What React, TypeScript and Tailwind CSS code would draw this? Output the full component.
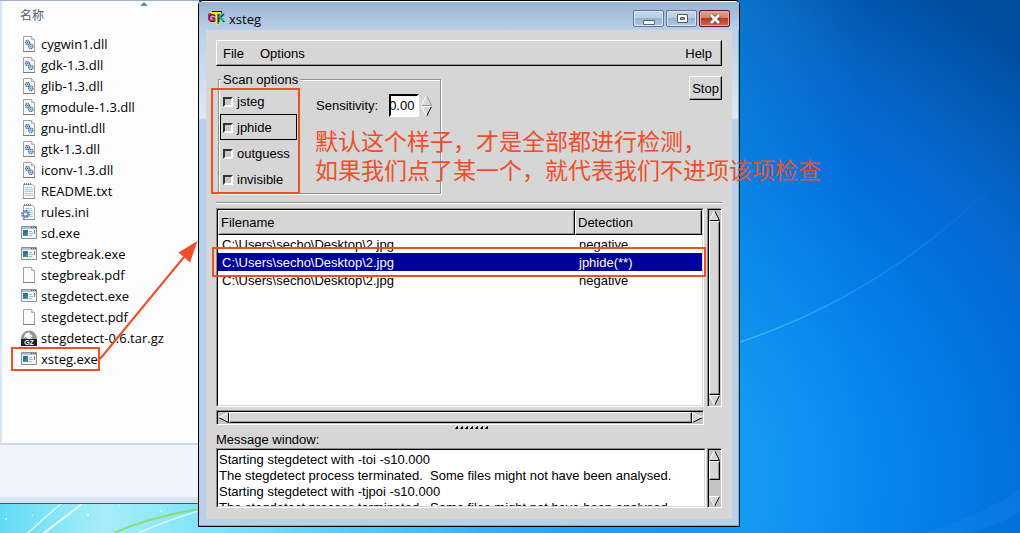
import React from "react";

type Kind = "dll" | "txt" | "ini" | "exe" | "pdf" | "gz";

const files: { name: string; kind: Kind }[] = [
  { name: "cygwin1.dll", kind: "dll" },
  { name: "gdk-1.3.dll", kind: "dll" },
  { name: "glib-1.3.dll", kind: "dll" },
  { name: "gmodule-1.3.dll", kind: "dll" },
  { name: "gnu-intl.dll", kind: "dll" },
  { name: "gtk-1.3.dll", kind: "dll" },
  { name: "iconv-1.3.dll", kind: "dll" },
  { name: "README.txt", kind: "txt" },
  { name: "rules.ini", kind: "ini" },
  { name: "sd.exe", kind: "exe" },
  { name: "stegbreak.exe", kind: "exe" },
  { name: "stegbreak.pdf", kind: "pdf" },
  { name: "stegdetect.exe", kind: "exe" },
  { name: "stegdetect.pdf", kind: "pdf" },
  { name: "stegdetect-0.6.tar.gz", kind: "gz" },
  { name: "xsteg.exe", kind: "exe" },
];

const results = [
  { file: "C:\\Users\\secho\\Desktop\\2.jpg", detection: "negative", selected: false },
  { file: "C:\\Users\\secho\\Desktop\\2.jpg", detection: "jphide(**)", selected: true },
  { file: "C:\\Users\\secho\\Desktop\\2.jpg", detection: "negative", selected: false },
];

const messages = [
  "Starting stegdetect with -toi -s10.000",
  "The stegdetect process terminated.  Some files might not have been analysed.",
  "Starting stegdetect with -tjpoi -s10.000",
  "The stegdetect process terminated.  Some files might not have been analysed.",
].join("\n");

function Page() {
  return (
    <>
      <path d="M2.5 .5h8l3 3v12h-11z" fill="#fbfbfb" stroke="#a2a2a2" />
      <path d="M10.5 .5v3h3" fill="#e4e4e4" stroke="#b5b5b5" />
      <path d="M2 15.5h12" stroke="#7d7d7d" />
    </>
  );
}

function FileIcon({ kind }: { kind: Kind }) {
  return (
    <svg className="mb-[2px] h-4 w-4 shrink-0" viewBox="0 0 16 16" fill="none" aria-hidden="true">
      {kind === "dll" && (
        <>
          <Page />
          <circle cx="6.5" cy="6.5" r="2" fill="#cfe2f3" stroke="#3a6da2" strokeWidth="1.3" strokeDasharray="1.2 .5" />
          <circle cx="9.8" cy="10.3" r="2.2" fill="#cfe2f3" stroke="#3a6da2" strokeWidth="1.3" strokeDasharray="1.2 .5" />
          <path d="M6 6h1v1H6zM9.3 9.8h1v1h-1z" fill="#1f4d80" />
        </>
      )}
      {kind === "pdf" && <Page />}
      {(kind === "txt" || kind === "ini") && (
        <>
          <path d="M2.5 1.5h9l2 2v12h-11z" fill="#fafafa" stroke="#a8a8a8" />
          <path d="M3 1h8" stroke="#777" strokeWidth="2" strokeDasharray="1 1" />
          <path d="M4 4.5h7M4 6.5h8M4 8.5h8M4 10.5h8M4 12.5h8" stroke="#a9cbe0" />
          <path d="M2 15.5h12" stroke="#8b8b8b" />
        </>
      )}
      {kind === "ini" && (
        <>
          <circle cx="4.5" cy="10" r="3.7" stroke="#557ca5" strokeWidth="1.6" strokeDasharray="1.5 1.4" />
          <circle cx="4.5" cy="10" r="2.4" fill="#e7f0f8" stroke="#6c93ba" strokeWidth="1.6" />
        </>
      )}
      {kind === "exe" && (
        <>
          <path d="M.5 1.5h15v12H.5z" fill="#f6f8f9" stroke="#87919b" />
          <path d="M1 2h14v2H1z" fill="#b5c0ca" />
          <path d="M10 2.5h1M12 2.5h1M14 2.5h1" stroke="#45515c" />
          <path d="M2 5h5v6H2z" fill="#2d72a5" />
          <path d="M2 11l5-4v4z" fill="#3e9a72" />
          <path d="M8 6.5h3M8 8.5h4M8 10.5h3" stroke="#aab3bb" />
          <path d="M13.5 5v4" stroke="#4a8ba5" />
        </>
      )}
      {kind === "gz" && (
        <>
          <path d="M0 9a8 8.500 0 0 1 16 0z" fill="#87999a" />
          <path d="M4 4l4-2 1 2 3 2-2 1 1 2H7L5 7 3 8z" fill="#f4f8f8" />
          <path d="M0 9h16v7H0z" fill="#1e2020" />
          <text x="8" y="15" textAnchor="middle" fontFamily="Liberation Sans, sans-serif" fontWeight="700" fontSize="7" fill="#fff">GZ</text>
        </>
      )}
    </svg>
  );
}

function Wallpaper() {
  return (
    <svg
      className="absolute inset-0 h-full w-full"
      viewBox="0 0 1020 533"
      preserveAspectRatio="none"
      fill="none"
      aria-hidden="true"
    >
      <defs>
        <radialGradient id="sky" gradientUnits="userSpaceOnUse" cx="0" cy="0" r="1" gradientTransform="translate(640 480) scale(600 560)">
          <stop offset="0.200" stopColor="#1298fb" />
          <stop offset="0.420" stopColor="#0585ef" />
          <stop offset="0.640" stopColor="#036fdd" />
          <stop offset="0.860" stopColor="#0562c0" />
          <stop offset="1.000" stopColor="#0054aa" />
        </radialGradient>
        <linearGradient id="edge" x1="740" y1="0" x2="860" y2="0" gradientUnits="userSpaceOnUse">
          <stop stopColor="#1b9ce0" stopOpacity="0.300" />
          <stop offset="1" stopColor="#1b9ce0" stopOpacity="0" />
        </linearGradient>
        <linearGradient id="corner" x1="900" y1="130" x2="1020" y2="0" gradientUnits="userSpaceOnUse">
          <stop stopColor="#003f8c" stopOpacity="0" />
          <stop offset="1" stopColor="#003f8c" stopOpacity="0.400" />
        </linearGradient>
        <linearGradient id="aqua" x1="0" y1="0" x2="740" y2="0" gradientUnits="userSpaceOnUse">
          <stop stopColor="#62dbf5" />
          <stop offset="0.140" stopColor="#a6eef9" />
          <stop offset="0.300" stopColor="#77e3fb" />
          <stop offset="0.600" stopColor="#35bcfd" />
          <stop offset="1" stopColor="#1298fb" stopOpacity="0" />
        </linearGradient>
        <linearGradient id="streak" x1="740" y1="0" x2="1000" y2="0" gradientUnits="userSpaceOnUse">
          <stop stopColor="#5cc3fa" stopOpacity="0.650" />
          <stop offset="0.500" stopColor="#5cc3fa" stopOpacity="0.250" />
          <stop offset="1" stopColor="#5cc3fa" stopOpacity="0" />
        </linearGradient>
      </defs>
      <path d="M0 0h1020v533H0z" fill="url(#sky)" />
      <path d="M740 0h280v533H740z" fill="url(#edge)" />
      <path d="M740 0h280v533H740z" fill="url(#corner)" />
      <path d="M0 500h740v33H0z" fill="url(#aqua)" />
      <path d="M740 342Q890 292 1005 173" stroke="url(#streak)" strokeWidth="1.500" />
      <path d="M925 533Q985 513 1020 490v22q-20 13-55 21z" fill="#2a92f4" opacity="0.200" />
      <path d="M44 533Q62 519 82 504" stroke="#e8fcfd" strokeWidth="2" />
      <path d="M28 533Q44 518 61 504M138 533q28-12 60-22" stroke="#d4f8fc" strokeWidth="1.500" />
      <path d="M114 533Q150 517 200 509" stroke="#8bdc76" strokeWidth="2" />
      <path d="M87 514h2v2h-2zM160 510h2v2h-2zM5 518h2v2H5zM32 515h1v1h-1zM119 505h1v1h-1z" fill="#effdff" />
    </svg>
  );
}

function Explorer() {
  return (
    <section aria-label="Files" className="absolute left-0 top-0 flex h-[504px] w-[199px] flex-col border-b border-[#4c5358] border-t border-t-[#9db0cc] bg-[#d9e5f2] pb-[6px] font-['Open_Sans','Noto_Sans_CJK_SC',sans-serif] text-[13px]">
      <div className="flex flex-1 flex-col border-l-2 border-[#dbe6f3] bg-[#fcfcfc]">
        <header className="relative flex h-[33px] shrink-0 items-center pb-1 pl-[18px] text-xs text-[#4c607a]">
          名称
          <svg className="absolute left-[138px] top-px h-1 w-2" viewBox="0 0 8 4" aria-hidden="true">
            <path d="M4 0l4 4H0z" fill="#5794bb" />
          </svg>
        </header>
        <ul>
          {files.map((f) => (
            <li key={f.name} className="flex h-[21px] items-center gap-1 pl-[19px] text-black">
              <FileIcon kind={f.kind} />
              <span className="whitespace-nowrap">{f.name}</span>
            </li>
          ))}
        </ul>
      </div>
      <footer className="h-[54px] shrink-0 border-t-2 border-[#ccd9ea] bg-[#f0f4fc]" />
    </section>
  );
}

function GtkLogo() {
  return (
    <svg className="h-4 w-[18px]" viewBox="0 0 18 16" fontFamily="Liberation Sans, sans-serif" fontWeight="700" aria-hidden="true">
      <text x="0" y="11" fontSize="11" fill="#10107c">G</text>
      <text x="-1" y="10" fontSize="11" fill="#e5141c">G</text>
      <text x="9" y="11" fontSize="11" fill="#10107c">K</text>
      <text x="8" y="10" fontSize="11" fill="#12d11c">K</text>
      <path d="M4 1h10M9.500 1v12" stroke="#10107c" strokeWidth="2" />
      <path d="M3 2h10M8.500 2v12" stroke="#ffee10" strokeWidth="2" />
    </svg>
  );
}

const captionButton =
  "flex h-[17px] w-[31px] items-center justify-center rounded-[2px] border border-[#5d7390] bg-[linear-gradient(#c6d7ea_0%,#b8cde3_48%,#98b2cf_50%,#b3cae2_100%)] shadow-[inset_0_0_0_1px_#dce8f4]";

function TitleBar() {
  return (
    <header className="flex h-[28px] shrink-0 items-start justify-between bg-[linear-gradient(#9ab3d1,#b9d0ea)] px-[9px] pt-[8px]">
      <div className="flex items-center gap-[3px] font-['Open_Sans',sans-serif] text-[13px] leading-[18px] text-black">
        <GtkLogo />
        xsteg
      </div>
      <div className="flex gap-[2px]">
        <button type="button" aria-label="Minimize" className={captionButton}>
          <svg className="h-3 w-3" viewBox="0 0 12 12"><path d="M.5 7.500h11v4H.5z" fill="#fff" stroke="#5b6678" /></svg>
        </button>
        <button type="button" aria-label="Maximize" className={captionButton}>
          <svg className="h-3 w-3" viewBox="0 0 12 12" fillRule="evenodd"><path d="M1.500 1.500h10v8h-10zM4.500 4.500h4v2h-4z" fill="#fff" stroke="#4e5b70" /></svg>
        </button>
        <button type="button" aria-label="Close" className="flex h-[17px] w-[31px] items-center justify-center rounded-[2px] border border-[#5c1421] bg-[linear-gradient(#e5a294_0%,#d87c6b_48%,#b83a22_50%,#cf6a55_100%)] shadow-[inset_0_0_0_1px_#e8aca0]">
          <svg className="h-3 w-3" viewBox="0 0 12 12">
            <path d="M2 2l8 8M10 2l-8 8" stroke="#60404b" strokeWidth="4.500" />
            <path d="M2 2l8 8M10 2l-8 8" stroke="#fff" strokeWidth="2.800" />
          </svg>
        </button>
      </div>
    </header>
  );
}

const arrows = {
  up: { fill: "M5.500 .5L10.500 10.500H.5z", light: "M.5 10.500L5.500 .5", dark: "M5.500 .5l5 10H.5" },
  down: { fill: "M.5 .5h10l-5 10z", light: "M5.500 10.500L.5 .5h10", dark: "M10.500 .5l-5 10" },
  left: { fill: "M.5 5.500L10.500 .5v10z", light: "M.5 5.500L10.500 .5", dark: "M.5 5.500l10 5V.5" },
  right: { fill: "M.5 .5l10 5-10 5z", light: "M.5 10.500V.5l10 5", dark: "M10.500 5.500l-10 5" },
};

function ArrowButton({
  dir,
  label,
  className,
  soft,
}: {
  dir: keyof typeof arrows;
  label: string;
  className: string;
  soft?: boolean;
}) {
  const a = arrows[dir];
  return (
    <button type="button" aria-label={label} className={className}>
      <svg className="block h-full w-full" viewBox="0 0 11 11" preserveAspectRatio="none" fill="none">
        <path d={a.fill} fill="#d6d6d6" />
        <path d={a.dark} stroke={soft ? "#969696" : "#000"} />
        <path d={a.light} stroke="#fff" />
      </svg>
    </button>
  );
}

const sunken = "border border-b-white border-l-[#8e8e8e] border-r-white border-t-[#8e8e8e]";
const raised = "border border-b-black border-l-white border-r-black border-t-white bg-[#d6d6d6] shadow-[inset_-1px_-1px_0_#969696]";

function VerticalScroll({ full }: { full?: boolean }) {
  return (
    <div className={`${sunken} flex min-h-0 flex-col`}>
      <div className="flex min-h-0 flex-1 flex-col border-l border-t border-black bg-[#c3c3c3] pr-px">
        <ArrowButton dir="up" label="Scroll up" className="h-[11px] w-[11px] shrink-0" />
        <div className={full ? `${raised} w-full flex-1` : `${raised} h-[19px] w-full`} />
        {!full && <div className="flex-1" />}
        <ArrowButton dir="down" label="Scroll down" className="h-[11px] w-[11px] shrink-0" />
      </div>
    </div>
  );
}

function HorizontalScroll() {
  return (
    <div className={`${sunken} flex`}>
      <div className="flex flex-1 border-l border-t border-black bg-[#c3c3c3] pb-px">
        <ArrowButton dir="left" label="Scroll left" className="h-[11px] w-[11px] shrink-0" />
        <div className={`${raised} h-full flex-1`} />
        <ArrowButton dir="right" label="Scroll right" className="h-[11px] w-[11px] shrink-0" />
      </div>
    </div>
  );
}

function ScanOptions() {
  return (
    <fieldset className="ml-[2px] h-[122px] w-[223px] border border-[#939393] pl-px shadow-[1px_1px_0_#fff,inset_1px_1px_0_#fff]">
      <legend className="ml-px bg-[#d6d6d6] px-[2px] leading-[15px]">Scan options</legend>
      <div className="flex items-start gap-[19px]">
        <div className="flex w-[77px] shrink-0 flex-col pt-px">
          {["jsteg", "jphide", "outguess", "invisible"].map((name) => (
            <label
              key={name}
              className={
                name === "jphide"
                  ? "flex h-[26px] items-center gap-1 border border-black pl-[2px] pt-[2px]"
                  : "flex h-[26px] items-center gap-1 border border-transparent pl-[2px] pt-[2px]"
              }
            >
              <input
                type="checkbox"
                className="h-[10px] w-[10px] shrink-0 appearance-none border-2 border-b-white border-l-[#333] border-r-white border-t-[#333] bg-[#c8c8c8]"
              />
              {name}
            </label>
          ))}
        </div>
        <div className="flex items-center gap-[11px] pt-[7px]">
          <label htmlFor="sensitivity">Sensitivity:</label>
          <div className="flex items-center gap-[2px]">
            <input
              id="sensitivity"
              defaultValue="0.00"
              className="h-[23px] w-[30px] border-2 border-b-white border-l-black border-r-white border-t-black bg-white indent-[-2px] outline-none"
            />
            <div className="flex flex-col">
              <ArrowButton dir="up" label="Increase sensitivity" className="h-[11px] w-[11px]" soft />
              <ArrowButton dir="down" label="Decrease sensitivity" className="h-[11px] w-[11px]" />
            </div>
          </div>
        </div>
      </div>
    </fieldset>
  );
}

function ResultList() {
  const head = `${raised} h-[25px] px-[2px] text-left font-normal`;
  return (
    <div className={`${sunken} min-w-0 overflow-hidden`}>
      <div className="h-full border border-b-[#d6d6d6] border-l-black border-r-[#d6d6d6] border-t-black bg-white">
        <table className="w-full table-fixed border-separate border-spacing-0">
          <thead>
            <tr>
              <th className={head}>Filename</th>
              <th className={`${head} w-[127px]`}>Detection</th>
            </tr>
          </thead>
          <tbody>
            {results.map((r, i) => (
              <tr key={i} className={r.selected ? "bg-[#00009c] text-white" : "text-black"}>
                <td className="h-[18px] p-0 pl-1 pt-[2px] leading-4">{r.file}</td>
                <td className="h-[18px] p-0 pl-1 pt-[2px] leading-4">{r.detection}</td>
              </tr>
            ))}
          </tbody>
        </table>
      </div>
    </div>
  );
}

function Xsteg() {
  return (
    <section
      aria-label="xsteg"
      className="absolute left-[198px] top-0 flex h-[527px] w-[542px] flex-col rounded-t-[5px] border border-black bg-[linear-gradient(#b4cbe6_0px,#b9d0ea_30px,#dfe9f5_117px,#b9d0ea_119px)] font-['Liberation_Sans',Arial,sans-serif] text-[13px] text-black shadow-[inset_-1px_-1px_0_#3ecbe3,inset_0_1px_0_#fff]"
    >
      <div className="flex flex-1 flex-col rounded-t-[4px] pt-px">
        <TitleBar />
        <div className="mx-[7px] mb-[7px] flex min-h-0 flex-1 flex-col bg-[#d6d6d6] px-[10px] pb-[11px] pt-[10px]">
          <nav className={`${raised} flex h-[26px] shrink-0 items-center gap-4 px-[6px] pt-[2px]`}>
            <button type="button">File</button>
            <button type="button">Options</button>
            <button type="button" className="ml-auto mr-[3px]">Help</button>
          </nav>
          <div className="mt-[6px] flex shrink-0 items-start justify-between">
            <ScanOptions />
            <button type="button" className={`${raised} mt-1 h-6 w-[33px] pt-px`}>Stop</button>
          </div>
          <hr className="mt-2 h-[2px] shrink-0 border-0 border-b border-t border-b-white border-t-[#939393]" />
          <div className="mt-1 grid min-h-0 flex-1 grid-cols-[1fr_15px] grid-rows-[1fr_15px] gap-[3px]">
            <ResultList />
            <VerticalScroll full />
            <HorizontalScroll />
          </div>
          <div className="flex h-[5px] shrink-0 items-start justify-center gap-[2px] pl-1 pt-px">
            {[0, 1, 2, 3, 4, 5, 6].map((n) => (
              <span key={n} className="h-[3px] w-[3px] border-b-2 border-l border-r-2 border-t border-b-black border-l-white border-r-black border-t-white" />
            ))}
          </div>
          <label htmlFor="messages" className="h-[18px] shrink-0 pt-px leading-[18px]">Message window:</label>
          <div className="flex h-[60px] shrink-0 gap-px">
            <div className={`${sunken} flex min-w-0 flex-1`}>
              <textarea
                id="messages"
                readOnly
                wrap="off"
                value={messages}
                className="block h-full w-full resize-none overflow-hidden border border-b-[#d6d6d6] border-l-black border-r-[#d6d6d6] border-t-black bg-white px-px pt-[2px] leading-4 outline-none"
              />
            </div>
            <VerticalScroll />
          </div>
        </div>
      </div>
    </section>
  );
}

function Annotations() {
  return (
    <div className="pointer-events-none absolute inset-0">
      <div className="absolute left-[11px] top-[347px] h-[24px] w-[89px] border-2 border-[#f04e28]" />
      <div className="absolute left-[211px] top-[88px] h-[106px] w-[89px] border-2 border-[#f04e28]" />
      <div className="absolute left-[212px] top-[247px] h-[30px] w-[494px] border-2 border-[#f04e28]" />
      <svg className="absolute left-[98px] top-[240px] h-[122px] w-[102px]" viewBox="98 240 102 122" aria-hidden="true">
        <path d="M100 359l84-102" stroke="#f04e28" strokeWidth="2" />
        <path d="M197.500 241L178.500 252.500 190 262.500z" fill="#f04e28" />
      </svg>
      <div className="absolute left-[315px] top-[128px] whitespace-nowrap font-['Liberation_Sans','Noto_Sans_CJK_SC',sans-serif] text-[23px] leading-[29px] text-[#f04e28]">
        <p className="h-[29px]">默认这个样子，才是全部都进行检测，</p>
        <p className="h-[29px]">如果我们点了某一个，就代表我们不进项该项检查</p>
      </div>
    </div>
  );
}

export default function App() {
  return (
    <main className="relative min-h-screen w-full overflow-hidden bg-[#0470d8]">
      <Wallpaper />
      <Explorer />
      <Xsteg />
      <Annotations />
    </main>
  );
}
